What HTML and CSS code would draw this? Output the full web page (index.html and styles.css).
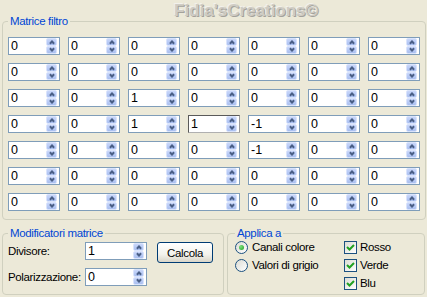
FILE: index.html
```html
<!DOCTYPE html>
<html>
<head>
<meta charset="utf-8">
<link rel="stylesheet" href="styles.css">
</head>
<body>
<div class="watermark">Fidia'sCreations©</div>
<fieldset class="group matrix">
  <legend>Matrice filtro</legend>
  <div class="grid">
    <div class="sb"><span class="v">0</span><span class="spin"><i class="up"></i><i class="dn"></i></span></div>
    <div class="sb"><span class="v">0</span><span class="spin"><i class="up"></i><i class="dn"></i></span></div>
    <div class="sb"><span class="v">0</span><span class="spin"><i class="up"></i><i class="dn"></i></span></div>
    <div class="sb"><span class="v">0</span><span class="spin"><i class="up"></i><i class="dn"></i></span></div>
    <div class="sb"><span class="v">0</span><span class="spin"><i class="up"></i><i class="dn"></i></span></div>
    <div class="sb"><span class="v">0</span><span class="spin"><i class="up"></i><i class="dn"></i></span></div>
    <div class="sb"><span class="v">0</span><span class="spin"><i class="up"></i><i class="dn"></i></span></div>

    <div class="sb"><span class="v">0</span><span class="spin"><i class="up"></i><i class="dn"></i></span></div>
    <div class="sb"><span class="v">0</span><span class="spin"><i class="up"></i><i class="dn"></i></span></div>
    <div class="sb"><span class="v">0</span><span class="spin"><i class="up"></i><i class="dn"></i></span></div>
    <div class="sb"><span class="v">0</span><span class="spin"><i class="up"></i><i class="dn"></i></span></div>
    <div class="sb"><span class="v">0</span><span class="spin"><i class="up"></i><i class="dn"></i></span></div>
    <div class="sb"><span class="v">0</span><span class="spin"><i class="up"></i><i class="dn"></i></span></div>
    <div class="sb"><span class="v">0</span><span class="spin"><i class="up"></i><i class="dn"></i></span></div>

    <div class="sb"><span class="v">0</span><span class="spin"><i class="up"></i><i class="dn"></i></span></div>
    <div class="sb"><span class="v">0</span><span class="spin"><i class="up"></i><i class="dn"></i></span></div>
    <div class="sb"><span class="v">1</span><span class="spin"><i class="up"></i><i class="dn"></i></span></div>
    <div class="sb"><span class="v">0</span><span class="spin"><i class="up"></i><i class="dn"></i></span></div>
    <div class="sb"><span class="v">0</span><span class="spin"><i class="up"></i><i class="dn"></i></span></div>
    <div class="sb"><span class="v">0</span><span class="spin"><i class="up"></i><i class="dn"></i></span></div>
    <div class="sb"><span class="v">0</span><span class="spin"><i class="up"></i><i class="dn"></i></span></div>

    <div class="sb"><span class="v">0</span><span class="spin"><i class="up"></i><i class="dn"></i></span></div>
    <div class="sb"><span class="v">0</span><span class="spin"><i class="up"></i><i class="dn"></i></span></div>
    <div class="sb"><span class="v">1</span><span class="spin"><i class="up"></i><i class="dn"></i></span></div>
    <div class="sb focus"><span class="v">1</span><span class="spin"><i class="up"></i><i class="dn"></i></span></div>
    <div class="sb"><span class="v">-1</span><span class="spin"><i class="up"></i><i class="dn"></i></span></div>
    <div class="sb"><span class="v">0</span><span class="spin"><i class="up"></i><i class="dn"></i></span></div>
    <div class="sb"><span class="v">0</span><span class="spin"><i class="up"></i><i class="dn"></i></span></div>

    <div class="sb"><span class="v">0</span><span class="spin"><i class="up"></i><i class="dn"></i></span></div>
    <div class="sb"><span class="v">0</span><span class="spin"><i class="up"></i><i class="dn"></i></span></div>
    <div class="sb"><span class="v">0</span><span class="spin"><i class="up"></i><i class="dn"></i></span></div>
    <div class="sb"><span class="v">0</span><span class="spin"><i class="up"></i><i class="dn"></i></span></div>
    <div class="sb"><span class="v">-1</span><span class="spin"><i class="up"></i><i class="dn"></i></span></div>
    <div class="sb"><span class="v">0</span><span class="spin"><i class="up"></i><i class="dn"></i></span></div>
    <div class="sb"><span class="v">0</span><span class="spin"><i class="up"></i><i class="dn"></i></span></div>

    <div class="sb"><span class="v">0</span><span class="spin"><i class="up"></i><i class="dn"></i></span></div>
    <div class="sb"><span class="v">0</span><span class="spin"><i class="up"></i><i class="dn"></i></span></div>
    <div class="sb"><span class="v">0</span><span class="spin"><i class="up"></i><i class="dn"></i></span></div>
    <div class="sb"><span class="v">0</span><span class="spin"><i class="up"></i><i class="dn"></i></span></div>
    <div class="sb"><span class="v">0</span><span class="spin"><i class="up"></i><i class="dn"></i></span></div>
    <div class="sb"><span class="v">0</span><span class="spin"><i class="up"></i><i class="dn"></i></span></div>
    <div class="sb"><span class="v">0</span><span class="spin"><i class="up"></i><i class="dn"></i></span></div>

    <div class="sb"><span class="v">0</span><span class="spin"><i class="up"></i><i class="dn"></i></span></div>
    <div class="sb"><span class="v">0</span><span class="spin"><i class="up"></i><i class="dn"></i></span></div>
    <div class="sb"><span class="v">0</span><span class="spin"><i class="up"></i><i class="dn"></i></span></div>
    <div class="sb"><span class="v">0</span><span class="spin"><i class="up"></i><i class="dn"></i></span></div>
    <div class="sb"><span class="v">0</span><span class="spin"><i class="up"></i><i class="dn"></i></span></div>
    <div class="sb"><span class="v">0</span><span class="spin"><i class="up"></i><i class="dn"></i></span></div>
    <div class="sb"><span class="v">0</span><span class="spin"><i class="up"></i><i class="dn"></i></span></div>
  </div>
</fieldset>

<div class="bottom">
  <fieldset class="group mods">
    <legend>Modificatori matrice</legend>
    <div class="modgrid">
      <span class="lbl">Divisore:</span>
      <div class="sb wide"><span class="v">1</span><span class="spin"><i class="up"></i><i class="dn"></i></span></div>
      <button class="btn">Calcola</button>
      <span class="lbl">Polarizzazione:</span>
      <div class="sb wide"><span class="v">0</span><span class="spin"><i class="up"></i><i class="dn"></i></span></div>
    </div>
  </fieldset>
  <fieldset class="group apply">
    <legend>Applica a</legend>
    <div class="applycols">
      <div class="col radios">
        <div class="opt"><span class="radio checked"></span><span class="t">Canali colore</span></div>
        <div class="opt"><span class="radio"></span><span class="t">Valori di grigio</span></div>
      </div>
      <div class="col checks">
        <div class="opt"><span class="check"><svg width="11" height="11" viewBox="0 0 11 11"><polyline points="2,5 4.5,7.5 9,3" fill="none" stroke="#21a121" stroke-width="2"/></svg></span><span class="t">Rosso</span></div>
        <div class="opt"><span class="check"><svg width="11" height="11" viewBox="0 0 11 11"><polyline points="2,5 4.5,7.5 9,3" fill="none" stroke="#21a121" stroke-width="2"/></svg></span><span class="t">Verde</span></div>
        <div class="opt"><span class="check"><svg width="11" height="11" viewBox="0 0 11 11"><polyline points="2,5 4.5,7.5 9,3" fill="none" stroke="#21a121" stroke-width="2"/></svg></span><span class="t">Blu</span></div>
      </div>
    </div>
  </fieldset>
</div>
</body>
</html>
```

FILE: styles.css
```css
html, body {
  margin: 0;
  padding: 0;
}
body {
  width: 427px;
  height: 297px;
  background: #ece9d8;
  font-family: "Liberation Sans", Arial, sans-serif;
  font-size: 11.5px;
  letter-spacing: -0.35px;
  color: #000;
  position: relative;
  overflow: hidden;
  padding-left: 2px;
  box-sizing: border-box;
  padding-top: 14px;
}
.watermark {
  position: absolute;
  left: 174px;
  top: 1px;
  font-family: "Liberation Sans", Arial, sans-serif;
  font-weight: bold;
  font-size: 17px;
  line-height: 20px;
  letter-spacing: 0;
  color: #cfccc4;
  text-shadow: 1px 1px 0 #a3a19b, -1px -1px 0 #f2f1ec, 0 0 1px #aaa8a1;
}
.group {
  margin: 0;
  border: 1px solid #d0d0bf;
  border-radius: 4px;
  box-sizing: border-box;
  min-width: 0;
}
.group legend {
  color: #0046d5;
  padding: 0 2px;
  line-height: 14px;
  font-size: 11.5px;
}
.matrix {
  width: 424px;
  padding: 9px 5px 8px 5px;
}
.grid {
  display: grid;
  grid-template-columns: repeat(7, 52px);
  grid-auto-rows: 18px;
  column-gap: 8px;
  row-gap: 8px;
}
.sb {
  display: flex;
  height: 18px;
  box-sizing: border-box;
  border: 1px solid #7f9db9;
  background: #fff;
  padding: 0 2px 0 2px;
}
.sb.focus {
  border-color: #5a5a5a #9a9a9a #b0b0b0 #5a5a5a;
}
.sb .v {
  flex: 1;
  font-family: "Liberation Sans", Arial, sans-serif;
  font-size: 12.5px;
  letter-spacing: 0;
  line-height: 16px;
}
.spin {
  width: 11px;
  display: flex;
  flex-direction: column;
}
.spin i {
  flex: 1;
  display: flex;
  align-items: center;
  justify-content: center;
  background: linear-gradient(#c9d7fa, #a9bff0);
  border: 1px solid #d9e3fc;
  border-radius: 2px;
  box-sizing: border-box;
}
.spin i::before {
  content: "";
  width: 2px;
  height: 2px;
  border-left: 2px solid #4a5f87;
  border-top: 2px solid #4a5f87;
}
.spin .up::before {
  transform: translateY(1px) rotate(45deg);
}
.spin .dn::before {
  transform: translateY(-1px) rotate(225deg);
}
.bottom {
  display: flex;
  gap: 3px;
  margin-top: 6px;
}
.mods {
  width: 222px;
  padding: 2px 5px 8px 5px;
}
.modgrid {
  display: grid;
  grid-template-columns: 77px 62px 56px;
  grid-template-rows: 18px 18px;
  row-gap: 8px;
  align-items: center;
}
.lbl {
  line-height: 14px;
  white-space: nowrap;
}
.sb.wide {
  width: 62px;
}
.btn {
  grid-column: 3;
  grid-row: 1 / span 2;
  align-self: start;
  margin-left: 10px;
  width: 56px;
  height: 21px;
  padding: 0;
  border: 1px solid #003c74;
  border-radius: 3px;
  background: linear-gradient(#ffffff, #f3f2ec 60%, #d9d5c8);
  font-family: "Liberation Sans", Arial, sans-serif;
  font-size: 11.5px;
  letter-spacing: -0.35px;
  color: #000;
}
.apply {
  width: 198px;
  padding: 1px 5px 3px 7px;
}
.applycols {
  display: flex;
}
.col {
  display: flex;
  flex-direction: column;
  gap: 5px;
}
.radios {
  width: 109px;
}
.opt {
  display: flex;
  align-items: center;
  height: 13px;
}
.opt .t {
  line-height: 13px;
  white-space: nowrap;
}
.radio {
  width: 13px;
  height: 13px;
  box-sizing: border-box;
  border: 1px solid #1c5180;
  border-radius: 50%;
  background: linear-gradient(135deg, #dcdcd4, #ffffff);
  margin-right: 4px;
  display: flex;
  align-items: center;
  justify-content: center;
}
.radio.checked::before {
  content: "";
  width: 5px;
  height: 5px;
  border-radius: 50%;
  background: radial-gradient(circle at 35% 35%, #7ce07c, #21a121);
}
.check {
  width: 13px;
  height: 13px;
  box-sizing: border-box;
  border: 1px solid #1c5180;
  background: linear-gradient(135deg, #dcdcd4, #ffffff);
  margin-right: 3px;
  display: flex;
  align-items: center;
  justify-content: center;
}
.check svg {
  display: block;
}
```
